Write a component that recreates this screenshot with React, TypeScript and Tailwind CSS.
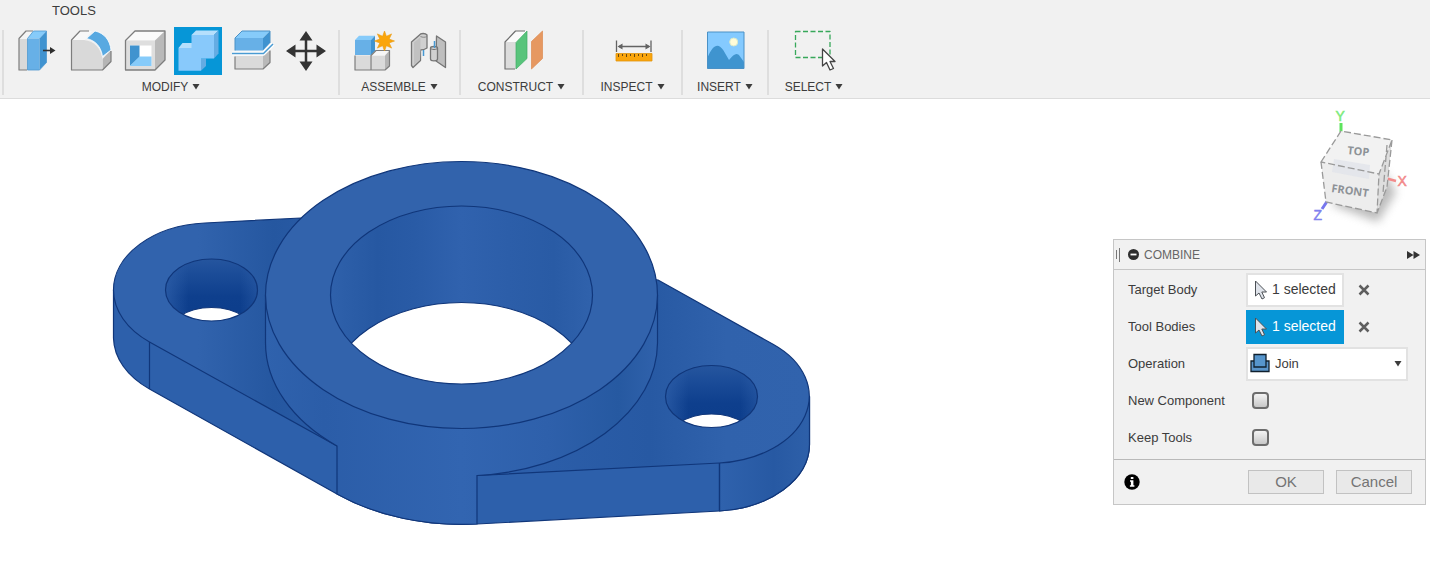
import React from "react";

type IconProps = { children: React.ReactNode };

function Glyph({ children }: IconProps) {
  return (
    <svg viewBox="0 0 48 48" className="size-12" fill="none" strokeLinejoin="round" aria-hidden="true">
      {children}
    </svg>
  );
}

const PressPullIcon = () => (
  <Glyph>
    <path d="M7 11.5 14 4h10l-7.5 7.5V43H7z" fill="#f4f4f4" />
    <path d="M7 12h8.5v31H7z" fill="#d9d9d9" />
    <path d="M21 4h-7L7 11.5V43h8" stroke="#7d7d7d" strokeWidth="1.2" />
    <path d="M15.5 11.5 21.5 4h13l-7 7.5z" fill="#86cbfa" />
    <path d="M15.5 11.5h12V43h-12z" fill="#67b0e7" />
    <path d="m27.500 11.500 7-7.500v31.500l-7 7.500z" fill="#4093d0" />
    <path d="M15.500 11.500 21.500 4h13v31.500l-7 7.500h-12z" stroke="#4f98cf" strokeWidth=".8" />
    <path d="M31 23.500h8" stroke="#2f2f2f" strokeWidth="1.600" />
    <path d="m38 20 5.500 3.500L38 27z" fill="#2f2f2f" />
  </Glyph>
);

const FilletIcon = () => (
  <Glyph>
    <path d="M5.500 13 14 4h12l-7 9z" fill="#f8f8f8" />
    <path d="M36.500 32 45 23v11.500L36.500 43z" fill="#b5b5b5" />
    <path d="M5.500 13H18c10 1 17 8 18.500 19v11h-31z" fill="#d9d9d9" />
    <path d="M45 24v10.500L36.500 43h-31V13L14 4h9" stroke="#7d7d7d" strokeWidth="1.200" />
    <path d="M20.500 11.500 29 4c9 2 15 9 16 19l-8.500 6.500c-1.500-10-7-16-16-18z" fill="#58a9e1" stroke="#fff" strokeWidth=".8" />
  </Glyph>
);

const ShellIcon = () => (
  <Glyph>
    <path d="M5.500 13.500 15 4h30l-10 9.500z" fill="#fafafa" />
    <path d="M35 13.500 45 4v29L35 43z" fill="#b9b9b9" />
    <path d="M5.500 13.500H35V43H5.500z" fill="#dedede" />
    <path d="M10 18.500h21.500V39H10z" fill="#fff" />
    <path d="M10 18.500h9.500V30L10 39z" fill="#4093cf" />
    <path d="M10 39l9.500-9.500h12V39z" fill="#86cbfa" />
    <path d="M5.500 13.500 15 4h30v29L35 43H5.500z" stroke="#7d7d7d" strokeWidth="1.300" />
  </Glyph>
);

const CombineIcon = () => (
  <Glyph>
    <path d="M4.500 21 8.500 16H18v5z" fill="#b5dffc" />
    <path d="m17.500 8 4.500-4.500h22.500L40 8z" fill="#b5dffc" />
    <path d="m40 8 4.500-4.500v23L40 31.500z" fill="#64ace3" />
    <path d="M27 31.500h5V39l-5 4.700z" fill="#64ace3" />
    <path d="M17.500 8H40v23.500H27v12.200H4.500V21h13z" fill="#88c9fb" />
  </Glyph>
);

const SplitIcon = () => (
  <Glyph>
    <path d="M7 11 14 4h28l-7 7z" fill="#86cbfa" />
    <path d="M7 11h28v12.500H7z" fill="#67b0e7" />
    <path d="m35 11 7-7v12l-7 7.500z" fill="#4093d0" />
    <path d="M7 23.500V11l7-7h28v12" stroke="#4a91c6" />
    <path d="M7 29h28v13H7z" fill="#dadada" />
    <path d="m35 29 7-6v12.500L35 42z" fill="#b9b9b9" />
    <path d="M7 29.500V42h28l7-6.500V23.500" stroke="#7d7d7d" strokeWidth="1.200" />
    <path d="M4 26.500h31.500l9.500-9.500" stroke="#fff" strokeWidth="4" />
    <path d="M4 26.500h31.500l9.500-9.500" stroke="#4a9bd2" strokeWidth="1.500" />
  </Glyph>
);

const MoveIcon = () => (
  <Glyph>
    <path d="M24 10v28M10 24h28" stroke="#343434" strokeWidth="2.500" />
    <path d="m24 4 6.500 9.500h-13zM24 44l6.500-9.500h-13zM4 24l9.500-6.500v13zM44 24l-9.500-6.500v13z" fill="#343434" />
  </Glyph>
);

const NewComponentIcon = () => (
  <Glyph>
    <path d="m7 13 4-4.300h16L23 13z" fill="#86cbfa" />
    <path d="M7 13h16v15H7z" fill="#67b0e7" />
    <path d="m23 13 4-4.300v15L23 28z" fill="#4093d0" />
    <path d="M7 28.500h15.500V43H7z" fill="#dadada" />
    <path d="M23 28.500h14V43H23z" fill="#dadada" />
    <path d="m23 28.500 5-5h13.500L37 28.500z" fill="#f6f6f6" />
    <path d="m37 28.500 4.500-5V39L37 43z" fill="#b5b5b5" />
    <path d="M7 28.500V43h30l4.500-4V23.500H28l-5 5V43" stroke="#7d7d7d" strokeWidth="1.200" />
    <path
      d="m36.500 4 1.900 5.300 5.200-2.400-2.400 5.200 5.300 1.900-5.300 1.900 2.400 5.200-5.200-2.400-1.900 5.300-1.900-5.300-5.200 2.400 2.400-5.200-5.300-1.900 5.300-1.900-2.400-5.200 5.200 2.400z"
      fill="#faa50b"
      stroke="#e99b13"
      strokeWidth=".6"
    />
  </Glyph>
);

const JointIcon = () => (
  <Glyph>
    <path d="M7.500 15 15.500 8c1-2 6-2 7.500 0v13c-2 1.500-5 2-6.500 2v10.500L9 40.500l-1.500-2z" fill="#d0d0d0" stroke="#757575" strokeWidth="1.300" />
    <path d="M10 15.500 16.500 10v12.500l-.5 10L10 38z" fill="#c1c1c1" />
    <path d="M16.500 9.500c2 1 4.500 1 6.500 0" stroke="#858585" />
    <path d="m32.500 9 9 6v25.500L32 34z" fill="#bebebe" stroke="#757575" strokeWidth="1.300" />
    <path d="M26.500 21c0-2 7-2 7 0v11c0 2.500-7 2.500-7 0z" fill="#d0d0d0" stroke="#757575" strokeWidth="1.300" />
    <path d="M26.500 21c0 2 7 2 7 0" stroke="#757575" />
    <path d="M19.500 23v6M30.500 14v7" stroke="#4799d2" strokeWidth="1.500" />
  </Glyph>
);

const ConstructIcon = () => (
  <Glyph>
    <path d="M7 15 17.500 4H29L18 15z" fill="#fbfbfb" />
    <path d="M7 15h11v27H7z" fill="#dcdcdc" />
    <path d="M27 4h-9.500L7 15v27h10" stroke="#6e6e6e" strokeWidth="1.200" />
    <path d="M18 15.500 29 4v27.500L18 42z" fill="#58c47b" stroke="#40ad65" strokeWidth=".7" />
    <path d="M33.500 14.500 44.500 4v27.500L33.500 42z" fill="#e69861" stroke="#dc8b50" strokeWidth=".7" />
  </Glyph>
);

const InspectIcon = () => (
  <Glyph>
    <path d="M7.500 13.500v11.500M42 13.500v11.500M10 19.500h30" stroke="#636363" strokeWidth="1.300" />
    <path d="m8.500 19.500 5-3v6zM41.500 19.500l-5-3v6z" fill="#636363" />
    <path d="M7 26.500h36V34H7z" fill="#faa50b" stroke="#e2940d" strokeWidth=".8" />
    <path d="M9.500 27v3m4-3v2m4-2v3m4-3v2m4-2v3m4-3v2m4-2v3m4-3v2" stroke="#674711" />
  </Glyph>
);

const InsertIcon = () => (
  <Glyph>
    <path d="M6.500 5H43v36.500H6.500z" fill="#84caff" />
    <circle cx="32.700" cy="15" r="4" fill="#fffcd8" stroke="#d9e9cc" />
    <path d="M6.500 30.500c6-14 11-14.500 16-7l5.500 9.500c5-6 8-8 11-3.500l4 5.500v6.500H6.500z" fill="#3f94cf" />
    <path d="M6.500 5H43v36.500H6.500z" stroke="#4a91c6" />
  </Glyph>
);

const SelectIcon = () => (
  <Glyph>
    <path d="M5.500 4.500h34.500v26H5.500z" stroke="#37a85a" strokeWidth="1.300" strokeDasharray="5 2.500" />
    <path d="M32.500 22v17l4-3.500 3.500 7.500 3.500-1.500-3.500-7h5z" fill="#fff" stroke="#454545" strokeWidth="1.300" />
  </Glyph>
);

type Tool = { name: string; icon: React.ReactNode; active?: boolean };
type ToolGroup = { label: string; width: string; tools: Tool[] };

const groups: ToolGroup[] = [
  {
    label: "MODIFY",
    width: "w-[336px]",
    tools: [
      { name: "Press Pull", icon: <PressPullIcon /> },
      { name: "Fillet", icon: <FilletIcon /> },
      { name: "Shell", icon: <ShellIcon /> },
      { name: "Combine", icon: <CombineIcon />, active: true },
      { name: "Split Body", icon: <SplitIcon /> },
      { name: "Move/Copy", icon: <MoveIcon /> },
    ],
  },
  {
    label: "ASSEMBLE",
    width: "w-[121px]",
    tools: [
      { name: "New Component", icon: <NewComponentIcon /> },
      { name: "Joint", icon: <JointIcon /> },
    ],
  },
  { label: "CONSTRUCT", width: "w-[123px]", tools: [{ name: "Offset Plane", icon: <ConstructIcon /> }] },
  { label: "INSPECT", width: "w-[99px]", tools: [{ name: "Measure", icon: <InspectIcon /> }] },
  { label: "INSERT", width: "w-[86px]", tools: [{ name: "Canvas", icon: <InsertIcon /> }] },
  { label: "SELECT", width: "w-[92px]", tools: [{ name: "Window Selection", icon: <SelectIcon /> }] },
];

function Toolbar() {
  return (
    <header className="border-b border-[#dcdcdc] bg-[#f1f1f1] pb-[3px]">
      <div className="flex h-[27px] items-start pl-[52px] pt-[3px]">
        <button type="button" className="text-[13px] leading-4">TOOLS</button>
      </div>
      <div className="flex pl-[2px]">
        {groups.map((g) => (
          <section key={g.label} className={`${g.width} flex shrink-0`} aria-label={g.label}>
            <div className="mt-[3px] w-[2px] shrink-0 bg-[#dedede]" />
            <div className="flex flex-1 flex-col items-center">
              <div className={g.tools.length > 2 ? "flex gap-[6px]" : "flex gap-2"}>
                {g.tools.map((t) => (
                  <button key={t.name} type="button" aria-label={t.name} className={t.active ? "bg-[#0696d7]" : ""}>
                    {t.icon}
                  </button>
                ))}
              </div>
              <button type="button" className="mt-1 flex items-center gap-1 text-[12px] leading-4">
                {g.label}
                <Caret />
              </button>
            </div>
          </section>
        ))}
      </div>
    </header>
  );
}

function Caret() {
  return (
    <svg viewBox="0 0 8 6" className="h-[6px] w-2" aria-hidden="true">
      <path d="M.5 0h7L4 5.500z" fill="#3c3c3c" />
    </svg>
  );
}

function FlangeModel() {
  return (
    <svg viewBox="100 150 720 385" className="h-[385px] w-[720px]" role="img" aria-label="Flange body" fill="none">
      <defs>
        <linearGradient id="wall" gradientUnits="userSpaceOnUse" x1="265" y1="0" x2="658" y2="0">
          <stop offset="0" stopColor="#2f62ad" />
          <stop offset=".15" stopColor="#2b5da8" />
          <stop offset=".5" stopColor="#3265b1" />
          <stop offset=".72" stopColor="#2e60ab" />
          <stop offset=".9" stopColor="#2659a1" />
          <stop offset="1" stopColor="#3062ac" />
        </linearGradient>
        <linearGradient id="bore" gradientUnits="userSpaceOnUse" x1="330" y1="0" x2="593" y2="0">
          <stop offset="0" stopColor="#2f61ab" />
          <stop offset=".18" stopColor="#2658a2" />
          <stop offset=".32" stopColor="#295ba6" />
          <stop offset=".5" stopColor="#3062ae" />
          <stop offset=".68" stopColor="#2c5ea9" />
          <stop offset=".85" stopColor="#295ba5" />
          <stop offset="1" stopColor="#3062ac" />
        </linearGradient>
        <linearGradient id="hole" x1="0" y1="0" x2="0" y2="1">
          <stop offset="0" stopColor="#26569f" />
          <stop offset=".25" stopColor="#1b4c98" />
          <stop offset=".6" stopColor="#0e3f8d" />
          <stop offset="1" stopColor="#0c3d8b" />
        </linearGradient>
        <linearGradient id="holeEdge" x1="0" y1="0" x2="1" y2="0">
          <stop offset="0" stopColor="#2f60aa" stopOpacity=".75" />
          <stop offset=".25" stopColor="#2f60aa" stopOpacity="0" />
          <stop offset=".8" stopColor="#2f60aa" stopOpacity="0" />
          <stop offset="1" stopColor="#2f60aa" stopOpacity=".55" />
        </linearGradient>
        <linearGradient id="plate" gradientUnits="userSpaceOnUse" x1="114" y1="0" x2="810" y2="0">
          <stop offset="0" stopColor="#3163ad" />
          <stop offset=".12" stopColor="#3163ad" />
          <stop offset=".23" stopColor="#2557a0" />
          <stop offset=".33" stopColor="#2b5da8" />
          <stop offset=".6" stopColor="#2c5ea9" />
          <stop offset=".77" stopColor="#2759a3" />
          <stop offset=".88" stopColor="#3062ac" />
          <stop offset="1" stopColor="#3163ad" />
        </linearGradient>
        <linearGradient id="rightEnd" gradientUnits="userSpaceOnUse" x1="719" y1="0" x2="810" y2="0">
          <stop offset="0" stopColor="#2f62ad" />
          <stop offset=".6" stopColor="#2759a3" />
          <stop offset="1" stopColor="#2e60a9" />
        </linearGradient>
        <clipPath id="boreClip"><ellipse cx="461.500" cy="295" rx="131" ry="89" /></clipPath>
        <clipPath id="leftClip"><ellipse cx="211.500" cy="290" rx="46" ry="31" /></clipPath>
        <clipPath id="rightClip"><ellipse cx="711.500" cy="396.500" rx="46" ry="31" /></clipPath>
      </defs>
      <g stroke="#10367a" strokeWidth="1.200" strokeLinejoin="round">
        <path d="M113.500 290V338A98 67 0 0 0 149.500 389L337 494A196 133.500 0 0 0 477 524L719.500 511A98 67 0 0 0 809.500 444.500V396.500L460 300z" fill="#2d60ab" />
        <path d="M719.500 463V511A98 67 0 0 0 809.500 444.500V396.500z" fill="url(#rightEnd)" />
        <path d="M113.500 290A98 67 0 0 1 205 223L301 218L658 280L773.500 344.500A98 67 0 0 1 719.500 463L477 475.500A196 133.500 0 0 1 337 446L149.500 342A98 67 0 0 1 113.500 290z" fill="url(#plate)" />
        <path d="M149.500 342V389M719.500 463V511" />
      </g>
      <path d="M265.500 295V343A196 133.500 0 0 0 337 446V494A196 133.500 0 0 0 477 524V475.500A196 133.500 0 0 0 657.500 343V295z" fill="url(#wall)" />
      <g stroke="#10367a" strokeWidth="1.200">
        <path d="M265.500 295V343A196 133.500 0 0 0 337 446V494A196 133.500 0 0 0 477 524V475.500A196 133.500 0 0 0 657.500 343V295" />
        <ellipse cx="461.500" cy="295" rx="196" ry="133.500" fill="#3263ac" />
        <g clipPath="url(#boreClip)">
          <path d="M330 205h264v180H330z" fill="url(#bore)" stroke="none" />
          <ellipse cx="461.500" cy="391.500" rx="131" ry="89" fill="#fff" />
        </g>
        <ellipse cx="461.500" cy="295" rx="131" ry="89" />
        <g clipPath="url(#leftClip)">
          <path d="M165 258h94v64h-94z" fill="url(#hole)" stroke="none" />
          <path d="M165 258h94v64h-94z" fill="url(#holeEdge)" stroke="none" />
          <ellipse cx="211.500" cy="338.500" rx="46" ry="31" fill="#fff" />
        </g>
        <ellipse cx="211.500" cy="290" rx="46" ry="31" />
        <g clipPath="url(#rightClip)">
          <path d="M665 365h94v64h-94z" fill="url(#hole)" stroke="none" />
          <path d="M665 365h94v64h-94z" fill="url(#holeEdge)" stroke="none" />
          <ellipse cx="711.500" cy="445" rx="46" ry="31" fill="#fff" />
        </g>
        <ellipse cx="711.500" cy="396.500" rx="46" ry="31" />
      </g>
    </svg>
  );
}

function ViewCube() {
  return (
    <svg viewBox="1300 100 130 130" className="absolute right-0 top-px size-[130px]" role="img" aria-label="View cube">
      <defs>
        <filter id="soft" x="-40%" y="-40%" width="180%" height="180%">
          <feGaussianBlur stdDeviation="5" />
        </filter>
      </defs>
      <path d="M1330 204 1378 222 1396 192 1384 172z" fill="#8e8e8e" opacity=".6" filter="url(#soft)" />
      <path d="M1341 132v-9" stroke="#5de45d" strokeWidth="3" />
      <path d="m1385 178 11 3" stroke="#f28a8a" strokeWidth="2.500" />
      <path d="m1328 200-6 9" stroke="#7676ee" strokeWidth="3" />
      <path d="m1321 162 20-31 51 9-13 34z" fill="#f2f2f2" />
      <path d="m1321 162 58 12-2 39-51-11z" fill="#ededed" />
      <path d="m1379 174 13-34-5 47-10 26z" fill="#dedede" />
      <path d="m1334 159 36 6-1 14-37-7z" fill="#dfe3e9" opacity=".7" />
      <path d="m1321 162 20-31 51 9-13 34zM1321 162l5 40 51 11 2-39M1392 140l-5 47-10 26M1387 145l-4 48" fill="none" stroke="#9a9a9a" strokeWidth="1.300" strokeDasharray="7 3" />
      <g fontFamily="'Open Sans', sans-serif" fontWeight="700" fill="#8d9297">
        <text x="1347" y="154" fontSize="11" transform="rotate(6 1347 154)">TOP</text>
        <text x="1331" y="192" fontSize="11" transform="rotate(8 1331 192)">FRONT</text>
      </g>
      <g fontFamily="'Liberation Sans', Arial, sans-serif" fontSize="14">
        <text x="1335.500" y="121" fill="#7deb7d" stroke="#7deb7d" strokeWidth=".5">Y</text>
        <text x="1397.500" y="186" fill="#f28a8a" stroke="#f28a8a" strokeWidth=".5">X</text>
        <text x="1313.500" y="220" fill="#8080ee" stroke="#8080ee" strokeWidth=".5">Z</text>
      </g>
    </svg>
  );
}

function SelectionRow({ id, label, active }: { id: string; label: string; active?: boolean }) {
  return (
    <>
      <label htmlFor={id}>{label}</label>
      <div className="flex items-center gap-[14px]">
        <button
          id={id}
          type="button"
          className={
            active
              ? "flex h-[34px] w-[98px] items-center gap-1 border-2 border-[#0696d7] bg-[#0696d7] pl-[6px] text-[14px] text-white"
              : "flex h-[34px] w-[98px] items-center gap-1 border-2 border-[#e2e2e2] bg-white pl-[6px] text-[14px]"
          }
        >
          <svg viewBox="0 0 14 20" className="h-5 w-[14px] shrink-0" aria-hidden="true">
            <path d="M1.500 1v15l3.500-3 3 6 2.500-1.300-2.700-5.700h4.700z" fill="#dfe3ea" stroke="#4c5055" strokeLinejoin="round" />
          </svg>
          <span className="whitespace-nowrap">1 selected</span>
        </button>
        <button type="button" aria-label={`Clear ${label}`}>
          <svg viewBox="0 0 12 12" className="size-3" aria-hidden="true">
            <path d="m1.500 1.500 9 9m0-9-9 9" stroke="#5e5e5e" strokeWidth="2.500" />
          </svg>
        </button>
      </div>
    </>
  );
}

function CheckRow({ id, label }: { id: string; label: string }) {
  return (
    <>
      <label htmlFor={id}>{label}</label>
      <input
        id={id}
        type="checkbox"
        className="ml-[6px] size-[17px] appearance-none rounded-[4px] border-2 border-[#6d6d6d] bg-linear-to-b from-[#f4f4f4] to-[#c8c8c8] checked:bg-[#0696d7]"
      />
    </>
  );
}

function CombineDialog() {
  return (
    <form
      aria-label="Combine"
      onSubmit={(e) => e.preventDefault()}
      className="absolute right-1 top-[140px] w-[313px] border border-[#c6c6c6] bg-[#f1f1f1]"
    >
      <div className="flex h-[30px] items-center border-b border-[#c6c6c6] pl-[2px] pr-[5px]">
        <svg viewBox="0 0 4 14" className="h-[14px] w-1" aria-hidden="true">
          <path d="M.5 2v9M3.500 0v14" stroke="#777" />
        </svg>
        <button type="button" aria-label="Collapse" className="ml-2">
          <svg viewBox="0 0 11 11" className="size-[11px]" aria-hidden="true">
            <circle cx="5.500" cy="5.500" r="5.500" fill="#2f2f2f" />
            <path d="M2.500 5.500h6" stroke="#fff" strokeWidth="1.800" />
          </svg>
        </button>
        <h2 className="ml-[5px] text-[12px] text-[#666]">COMBINE</h2>
        <button type="button" aria-label="Expand" className="ml-auto">
          <svg viewBox="0 0 13 8" className="h-2 w-[13px]" aria-hidden="true">
            <path d="M0 0l6.500 4L0 8zM6.500 0 13 4 6.500 8z" fill="#333" />
          </svg>
        </button>
      </div>
      <div className="grid auto-rows-[37px] grid-cols-[118px_1fr] items-center pb-[3px] pl-[14px] pt-px text-[13px]">
        <SelectionRow id="target-body" label="Target Body" />
        <SelectionRow id="tool-bodies" label="Tool Bodies" active />
        <label htmlFor="operation">Operation</label>
        <div className="relative w-[162px]">
          <select id="operation" defaultValue="Join" className="h-[34px] w-full appearance-none border-2 border-[#e2e2e2] bg-white pl-[27px] pr-5">
            <option>Join</option>
            <option>Cut</option>
            <option>Intersect</option>
          </select>
          <svg viewBox="0 0 20 20" className="pointer-events-none absolute left-1 top-[6px] size-5" aria-hidden="true">
            <path d="M1 8h18v10.500H1z" fill="#5a94c9" stroke="#10202e" strokeWidth="1.300" />
            <path d="M4 1.500h12V14H4z" fill="#5695cc" stroke="#10202e" strokeWidth="1.300" />
          </svg>
          <span className="pointer-events-none absolute right-[6px] top-[14px]"><Caret /></span>
        </div>
        <CheckRow id="new-component" label="New Component" />
        <CheckRow id="keep-tools" label="Keep Tools" />
      </div>
      <div className="flex h-[45px] items-center border-t border-[#b9b9b9] pl-[10px] pr-[13px]">
        <button type="button" aria-label="Information">
          <svg viewBox="0 0 16 16" className="size-4" aria-hidden="true">
            <circle cx="8" cy="8" r="7.700" fill="#000" />
            <path d="M6.800 3h2.600v2H6.800zM6 6.300h3.400v4.900h1v1.500H5.900v-1.500h1V7.800H6z" fill="#fff" />
          </svg>
        </button>
        <button type="submit" className="ml-auto h-6 w-[76px] border border-[#c2c2c2] bg-[#e9e9e9] text-[15px] leading-5 text-[#747474]">OK</button>
        <button type="button" className="ml-3 h-6 w-[76px] border border-[#c2c2c2] bg-[#e9e9e9] text-[15px] leading-5 text-[#747474]">Cancel</button>
      </div>
    </form>
  );
}

export default function App() {
  return (
    <div className="flex min-h-screen flex-col bg-white font-['Liberation_Sans',Arial,sans-serif] text-[#3c3c3c]">
      <Toolbar />
      <main className="relative flex-1 overflow-hidden pl-[100px] pt-[51px]">
        <FlangeModel />
        <ViewCube />
        <CombineDialog />
      </main>
    </div>
  );
}
